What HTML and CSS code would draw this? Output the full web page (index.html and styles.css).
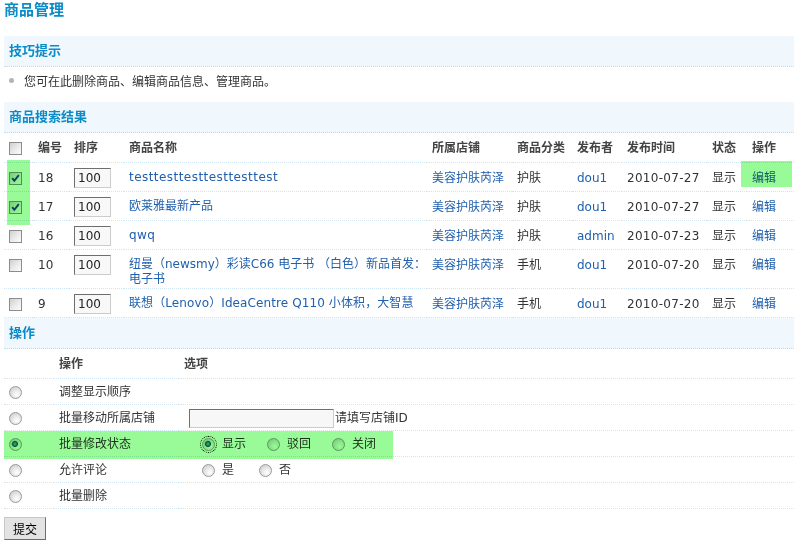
FILE: index.html
```html
<!DOCTYPE html>
<html lang="zh-CN">
<head>
<meta charset="utf-8">
<title>商品管理</title>
<link rel="stylesheet" href="styles.css">
</head>
<body>
<h1 class="page-title">商品管理</h1>

<h2 class="section-head">技巧提示</h2>
<ul class="tips">
  <li>您可在此删除商品、编辑商品信息、管理商品。</li>
</ul>

<form class="goods-form">
  <h2 class="section-head">商品搜索结果</h2>
  <table class="grid list">
    <colgroup>
      <col class="c-check"><col class="c-id"><col class="c-sort"><col class="c-name"><col class="c-store"><col class="c-cat"><col class="c-user"><col class="c-date"><col class="c-state"><col>
    </colgroup>
    <thead>
      <tr>
        <th><input type="checkbox" class="cb"></th>
        <th>编号</th><th>排序</th><th>商品名称</th><th>所属店铺</th><th>商品分类</th><th>发布者</th><th>发布时间</th><th>状态</th><th>操作</th>
      </tr>
    </thead>
    <tbody>
      <tr>
        <td><input type="checkbox" class="cb" checked></td>
        <td>18</td>
        <td><input type="text" class="sort" value="100"></td>
        <td class="name"><a href="#" class="latin">testtesttesttesttesttest</a></td>
        <td><a href="#">美容护肤芮泽</a></td>
        <td>护肤</td>
        <td><a href="#">dou1</a></td>
        <td class="date">2010-07-27</td>
        <td>显示</td>
        <td><a href="#">编辑</a></td>
      </tr>
      <tr>
        <td><input type="checkbox" class="cb" checked></td>
        <td>17</td>
        <td><input type="text" class="sort" value="100"></td>
        <td class="name"><a href="#">欧莱雅最新产品</a></td>
        <td><a href="#">美容护肤芮泽</a></td>
        <td>护肤</td>
        <td><a href="#">dou1</a></td>
        <td class="date">2010-07-27</td>
        <td>显示</td>
        <td><a href="#">编辑</a></td>
      </tr>
      <tr>
        <td><input type="checkbox" class="cb"></td>
        <td>16</td>
        <td><input type="text" class="sort" value="100"></td>
        <td class="name"><a href="#" class="latin">qwq</a></td>
        <td><a href="#">美容护肤芮泽</a></td>
        <td>护肤</td>
        <td><a href="#">admin</a></td>
        <td class="date">2010-07-23</td>
        <td>显示</td>
        <td><a href="#">编辑</a></td>
      </tr>
      <tr>
        <td><input type="checkbox" class="cb"></td>
        <td>10</td>
        <td><input type="text" class="sort" value="100"></td>
        <td class="name"><a href="#">纽曼（newsmy）彩读C66 电子书 （白色）新品首发：<br>电子书</a></td>
        <td><a href="#">美容护肤芮泽</a></td>
        <td>手机</td>
        <td><a href="#">dou1</a></td>
        <td class="date">2010-07-20</td>
        <td>显示</td>
        <td><a href="#">编辑</a></td>
      </tr>
      <tr>
        <td><input type="checkbox" class="cb"></td>
        <td>9</td>
        <td><input type="text" class="sort" value="100"></td>
        <td class="name"><a href="#" class="mixed">联想（Lenovo）IdeaCentre Q110 小体积，大智慧</a></td>
        <td><a href="#">美容护肤芮泽</a></td>
        <td>手机</td>
        <td><a href="#">dou1</a></td>
        <td class="date">2010-07-20</td>
        <td>显示</td>
        <td><a href="#">编辑</a></td>
      </tr>
    </tbody>
  </table>

  <h2 class="section-head">操作</h2>
  <table class="grid ops">
    <colgroup><col class="o-radio"><col class="o-name"><col></colgroup>
    <thead>
      <tr><th></th><th>操作</th><th>选项</th></tr>
    </thead>
    <tbody>
      <tr>
        <td><input type="radio" name="act" class="rd"></td>
        <td>调整显示顺序</td>
        <td></td>
      </tr>
      <tr>
        <td><input type="radio" name="act" class="rd"></td>
        <td>批量移动所属店铺</td>
        <td><input type="text" class="store-id">请填写店铺ID</td>
      </tr>
      <tr>
        <td><input type="radio" name="act" class="rd" checked></td>
        <td>批量修改状态</td>
        <td>
          <div class="opts"><label class="opt"><input type="radio" name="state" class="rd focus" checked>显示</label><label class="opt"><input type="radio" name="state" class="rd">驳回</label><label class="opt"><input type="radio" name="state" class="rd">关闭</label></div>
        </td>
      </tr>
      <tr>
        <td><input type="radio" name="act" class="rd"></td>
        <td>允许评论</td>
        <td>
          <div class="opts"><label class="opt"><input type="radio" name="comment" class="rd">是</label><label class="opt wide"><input type="radio" name="comment" class="rd">否</label></div>
        </td>
      </tr>
      <tr>
        <td><input type="radio" name="act" class="rd"></td>
        <td>批量删除</td>
        <td></td>
      </tr>
    </tbody>
  </table>

  <div class="submit-row"><button type="submit" class="btn">提交</button></div>
</form>

<div class="mark mark-check"></div>
<div class="mark mark-edit"></div>
<div class="mark mark-status"></div>
</body>
</html>
```

FILE: styles.css
```css
* { box-sizing: border-box; }

body {
  margin: 0;
  padding: 0 0 0 4px;
  position: relative;
  background: #fff;
  color: #333;
  font: 12px/20px "DejaVu Sans", "Noto Sans CJK SC", sans-serif;
}

a { color: #1f5fae; text-decoration: none; }

.page-title {
  margin: 0 0 16px;
  font-size: 15px;
  line-height: 20px;
  font-weight: bold;
  color: #0a8cc8;
}

.section-head {
  margin: 0;
  height: 31px;
  padding-left: 5px;
  background: #f0f7fd;
  border-bottom: 1px dotted #bcdcf0;
  font-size: 13px;
  line-height: 30px;
  font-weight: bold;
  color: #0a8cc8;
}

.tips {
  list-style: none;
  margin: 0;
  padding: 5px 0 10px 20px;
  line-height: 20px;
}
.tips li::before {
  content: "";
  display: inline-block;
  width: 5px;
  height: 5px;
  margin: 0 10px 0 -15px;
  border-radius: 50%;
  background: #b4b4b4;
  vertical-align: 3px;
}

.goods-form { margin: 0; }

.grid {
  width: 100%;
  table-layout: fixed;
  border-collapse: separate;
  border-spacing: 0;
}
.grid th,
.grid td {
  padding: 5px 5px 3px;
  text-align: left;
  vertical-align: top;
  line-height: 20px;
  border-bottom: 1px dotted #cfe5f4;
  white-space: nowrap;
  overflow: hidden;
}
.grid th {
  line-height: 21px;
  font-weight: bold;
  color: #444;
}
.list td.name {
  padding: 7px 5px 1px;
  line-height: 15px;
}
.list .latin { letter-spacing: 0.45px; }
.list .mixed { letter-spacing: 0.1px; }
.list .date { letter-spacing: 0.3px; }

.c-check { width: 29px; }
.c-id { width: 36px; }
.c-sort { width: 55px; }
.c-name { width: 303px; }
.c-store { width: 85px; }
.c-cat { width: 60px; }
.c-user { width: 50px; }
.c-date { width: 85px; }
.c-state { width: 40px; }

.ops td {
  padding: 4px 5px 2px;
  line-height: 19px;
}
.o-radio { width: 50px; }
.o-name { width: 125px; }

.cb {
  -webkit-appearance: none;
  appearance: none;
  width: 13px;
  height: 13px;
  margin: 0;
  border: 1px solid #8c8c8c;
  background: linear-gradient(135deg, #cfcfcf 0%, #ececec 55%, #fbfbfb 100%);
  vertical-align: middle;
}
.cb:checked {
  background:
    url("data:image/svg+xml,%3Csvg xmlns='http://www.w3.org/2000/svg' viewBox='0 0 11 11'%3E%3Cpath d='M2.2 5.2 L4.3 7.8 L8.8 2.2' fill='none' stroke='%23163d96' stroke-width='1.9'/%3E%3C/svg%3E") center / 11px 11px no-repeat,
    linear-gradient(135deg, #cfcfcf 0%, #ececec 55%, #fbfbfb 100%);
}

.rd {
  -webkit-appearance: none;
  appearance: none;
  width: 13px;
  height: 13px;
  margin: 0;
  border-radius: 50%;
  border: 1px solid #9a9a9a;
  background: radial-gradient(circle at 62% 68%, #ffffff 0, #ececec 35%, #c6c6c6 100%);
  vertical-align: middle;
}
.rd:checked {
  background:
    radial-gradient(circle at 45% 45%, #46c2b0 0, #0d5a64 2.6px, rgba(13,90,100,0) 3.6px),
    radial-gradient(circle at 62% 68%, #ffffff 0, #ececec 35%, #c6c6c6 100%);
}
.rd.focus {
  outline: 1px dotted #000;
  outline-offset: 1px;
}

.opts {
  display: flex;
  align-items: center;
  height: 19px;
}
.opt {
  display: flex;
  align-items: center;
  margin-left: 21px;
}
.opt:first-child { margin-left: 18px; }
.opt.wide { margin-left: 25px; }
.opt .rd { margin-right: 7px; }

.store-id {
  width: 145px;
  height: 19px;
  margin: 0 1px 0 5px;
  padding: 0 3px;
  border: 1px solid;
  border-color: #707070 #cccccc #cccccc #707070;
  background: #f7f7f7;
  vertical-align: top;
  font: 12px "DejaVu Sans", sans-serif;
}

.sort {
  width: 37px;
  height: 20px;
  margin: 0;
  padding: 0 3px;
  border: 1px solid;
  border-color: #6e6e6e #cccccc #cccccc #6e6e6e;
  background: #f8f8f8;
  color: #222;
  vertical-align: top;
  font: 12px "DejaVu Sans", sans-serif;
}

.submit-row { margin-top: 8px; }
.btn {
  height: 23px;
  margin: 0;
  padding: 0 8px;
  border: 1px solid;
  border-color: #c8c8c8 #6c6c6c #6c6c6c #c8c8c8;
  background: #e3e3e3;
  color: #000;
  font: 12px "Noto Sans CJK SC", sans-serif;
}

.mark {
  position: absolute;
  background: #98fb98;
  mix-blend-mode: multiply;
  pointer-events: none;
}
.mark-check { left: 7px; top: 160px; width: 23px; height: 65px; }
.mark-edit { left: 741px; top: 161px; width: 51px; height: 26px; }
.mark-status { left: 4px; top: 431px; width: 389px; height: 28px; }
```
